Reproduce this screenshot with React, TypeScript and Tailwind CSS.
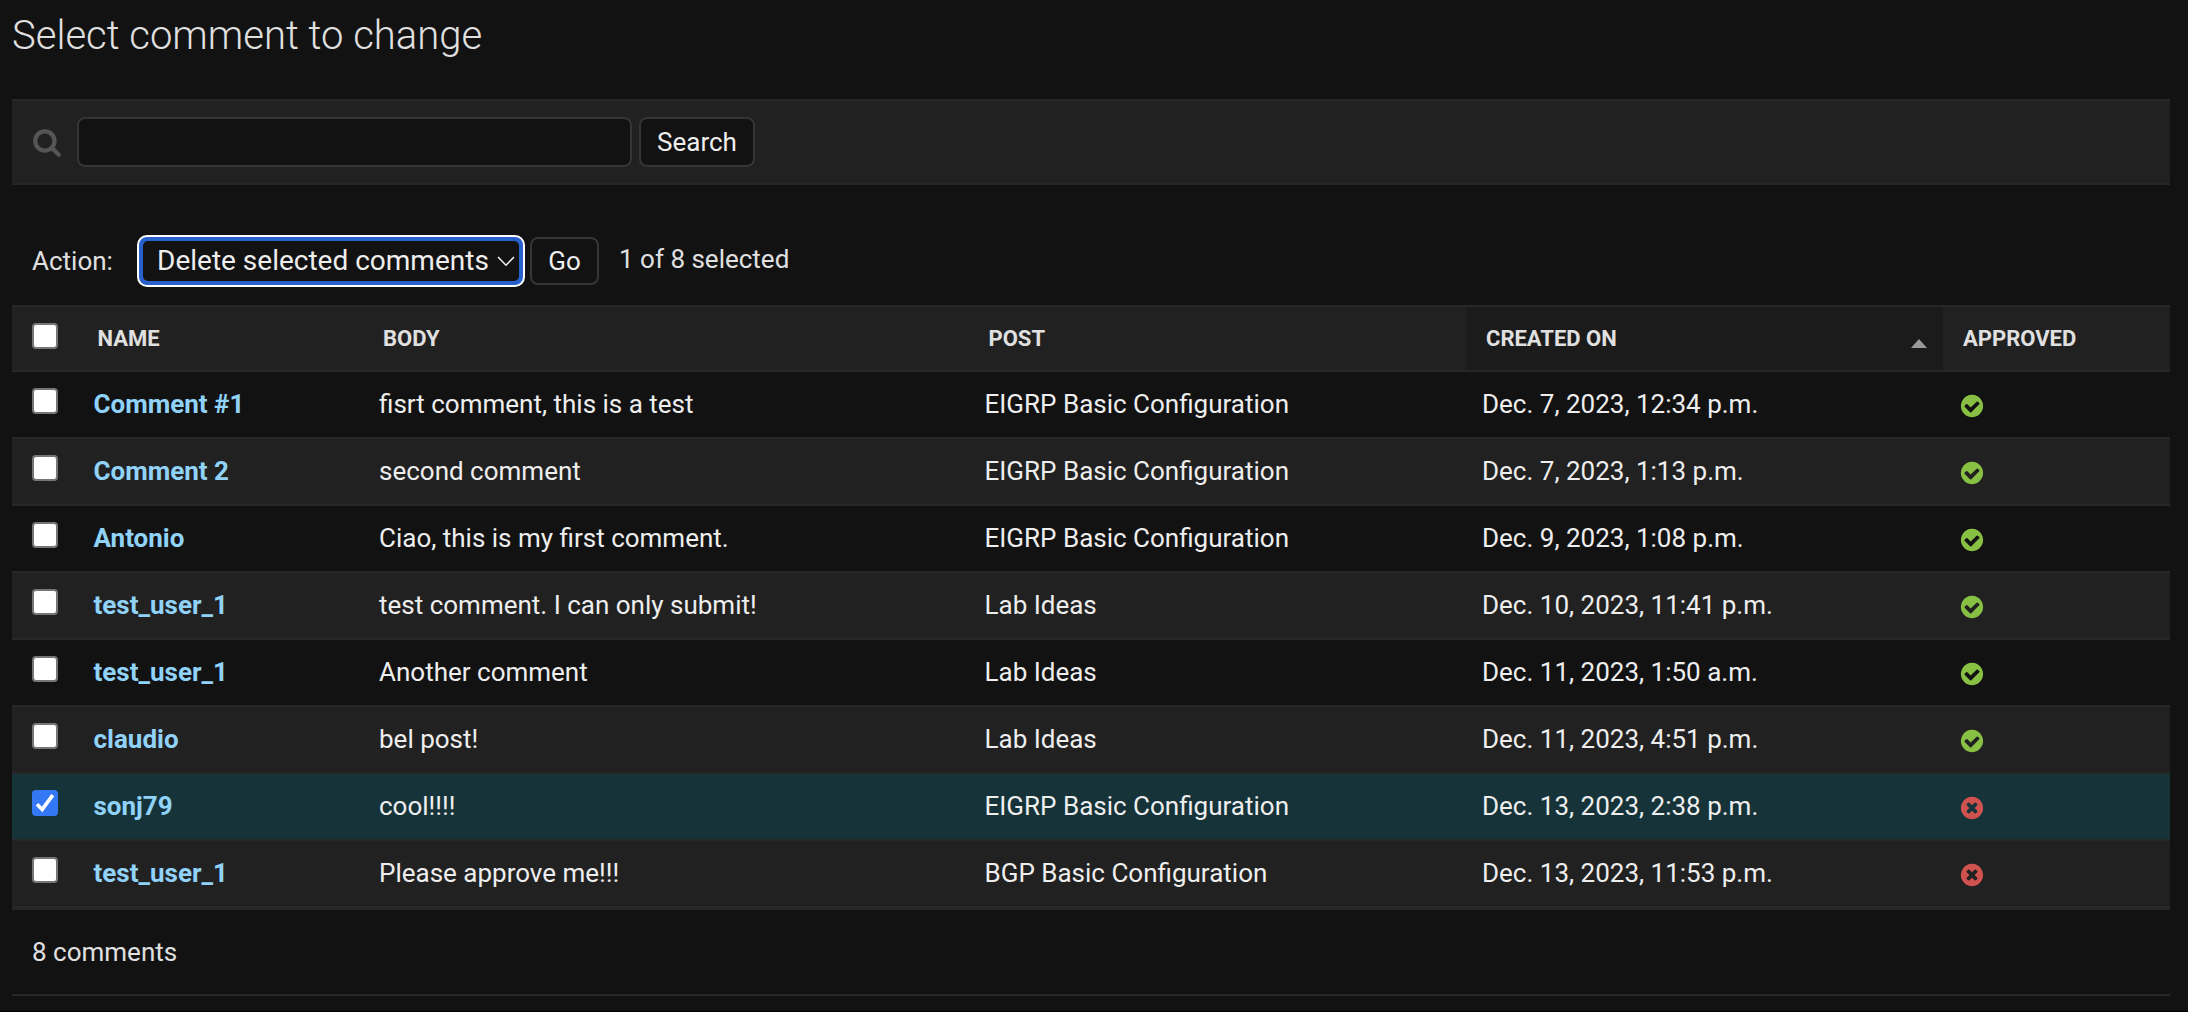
import React from "react";

const comments = [
  { name: "Comment #1", body: "fisrt comment, this is a test", post: "EIGRP Basic Configuration", created: "Dec. 7, 2023, 12:34 p.m.", approved: true },
  { name: "Comment 2", body: "second comment", post: "EIGRP Basic Configuration", created: "Dec. 7, 2023, 1:13 p.m.", approved: true },
  { name: "Antonio", body: "Ciao, this is my first comment.", post: "EIGRP Basic Configuration", created: "Dec. 9, 2023, 1:08 p.m.", approved: true },
  { name: "test_user_1", body: "test comment. I can only submit!", post: "Lab Ideas", created: "Dec. 10, 2023, 11:41 p.m.", approved: true },
  { name: "test_user_1", body: "Another comment", post: "Lab Ideas", created: "Dec. 11, 2023, 1:50 a.m.", approved: true },
  { name: "claudio", body: "bel post!", post: "Lab Ideas", created: "Dec. 11, 2023, 4:51 p.m.", approved: true },
  { name: "sonj79", body: "cool!!!!", post: "EIGRP Basic Configuration", created: "Dec. 13, 2023, 2:38 p.m.", approved: false, selected: true },
  { name: "test_user_1", body: "Please approve me!!!", post: "BGP Basic Configuration", created: "Dec. 13, 2023, 11:53 p.m.", approved: false },
];

const columns = "grid grid-cols-[65.5px_285.5px_605.5px_497.5px_477px_227px]";

function SearchIcon() {
  return (
    <svg viewBox="0 0 1792 1792" className="size-[30px] fill-[#555555]">
      <path d="M1216 832q0-185-131.5-316.5t-316.5-131.5-316.5 131.5-131.5 316.5 131.5 316.5 316.5 131.5 316.5-131.5 131.5-316.5zm512 832q0 52-38 90t-90 38q-54 0-90-38l-343-342q-179 124-399 124-143 0-273.5-55.5t-225-150-150-225-55.5-273.5 55.5-273.5 150-225 225-150 273.5-55.5 273.5 55.5 225 150 150 225 55.5 273.5q0 220-124 399l343 343q37 37 37 90z" />
    </svg>
  );
}

function StatusIcon({ ok }: { ok: boolean }) {
  return ok ? (
    <svg viewBox="0 0 1792 1792" className="size-[26px] fill-[#88c044]">
      <path d="M1412 734q0-28-18-46l-91-90q-19-19-45-19t-45 19l-408 407-226-226q-19-19-45-19t-45 19l-91 90q-18 18-18 46 0 27 18 45l362 362q19 19 45 19 27 0 46-19l543-543q18-18 18-45zm252 162q0 209-103 385.5t-279.5 279.5-385.5 103-385.5-103-279.5-279.5-103-385.5 103-385.5 279.5-279.5 385.5-103 385.5 103 279.5 279.5 103 385.5z" />
    </svg>
  ) : (
    <svg viewBox="0 0 1792 1792" className="size-[26px] fill-[#cf524e]">
      <path d="M1277 1122q0-26-19-45l-181-181 181-181q19-19 19-45 0-27-19-46l-90-90q-19-19-46-19-26 0-45 19l-181 181-181-181q-19-19-45-19-27 0-46 19l-90 90q-19 19-19 46 0 26 19 45l181 181-181 181q-19 19-19 45 0 27 19 46l90 90q19 19 46 19 26 0 45-19l181-181 181 181q19 19 45 19 27 0 46-19l90-90q19-19 19-46zm387-226q0 209-103 385.5t-279.5 279.5-385.5 103-385.5-103-279.5-279.5-103-385.5 103-385.5 279.5-279.5 385.5-103 385.5 103 279.5 279.5 103 385.5z" />
    </svg>
  );
}

function Checkbox({ checked = false }: { checked?: boolean }) {
  return checked ? (
    <span className="block size-[26px] rounded-[4px] bg-[#3478f6]">
      <svg viewBox="0 0 26 26" className="size-[26px] fill-none stroke-white stroke-[3.6]">
        <path d="M5 14.2 L10.2 19.4 L20.8 5.2" />
      </svg>
    </span>
  ) : (
    <span className="block size-[26px] rounded-[4px] border-2 border-[#767676] bg-white" />
  );
}

function HeaderCell({ label }: { label: string }) {
  return <div className="flex h-full items-center pl-5 pb-px">{label}</div>;
}

export default function App() {
  return (
    <div className="flex h-[1012px] w-[2188px] flex-col border-b border-black bg-[#121212] pr-[18px] pl-3 font-[Roboto,sans-serif] text-[26px] text-[#eeeeee]">
      <h1 className="h-[99px] pt-3 text-[40px] leading-[48px] font-light text-[#e0e0e0]">Select comment to change</h1>

      <div className="flex h-[86px] items-center border-y-2 border-[#272727] bg-[#212121] pl-5">
        <SearchIcon />
        <input className="ml-[15px] h-[50px] w-[555px] rounded-[8px] border-2 border-[#353535] bg-[#121212] px-3" />
        <button className="ml-[7px] h-[50px] w-[116px] rounded-[8px] border-2 border-[#353535] bg-[#121212]">Search</button>
      </div>

      <div className="flex h-[120px] pt-[50px] pl-5">
        <span className="w-[105px] pt-[11px] leading-[30px] text-[#e0e0e0]">Action:</span>
        <div className="flex h-[52px] w-[388px] items-center justify-between rounded-[10px] border-2 border-white bg-[#2860cc] p-1">
          <div className="flex h-10 w-full items-center justify-between rounded-[5px] bg-[#121212] pr-1 pl-[14px] text-[28px]">
            <span className="pb-px leading-[38px] whitespace-nowrap">Delete selected comments</span>
            <svg viewBox="0 0 18 11" className="h-[11px] w-[18px] shrink-0 fill-none stroke-[#eeeeee] stroke-[1.6]">
              <path d="M1 1 L9 9.2 L17 1" />
            </svg>
          </div>
        </div>
        <button className="mt-[2px] ml-[5px] h-12 w-[69px] rounded-[8px] border-2 border-[#353535] bg-[#121212]">Go</button>
        <span className="ml-5 pt-[9px] leading-[30px] text-[#e0e0e0]">1 of 8 selected</span>
      </div>

      <div className="border-b-2 border-[#272727]">
        <div className={`${columns} h-[67px] items-center border-y-2 border-[#272727] bg-[#212121] text-[22px] font-bold text-[#e0e0e0]`}>
          <div className="flex h-full pt-4 pl-5"><Checkbox /></div>
          <HeaderCell label="NAME" />
          <HeaderCell label="BODY" />
          <HeaderCell label="POST" />
          <div className="flex h-full items-center justify-between bg-[#1b1b1b] pr-4 pb-px pl-5">
            <span>CREATED ON</span>
            <svg viewBox="0 0 16 9" className="mt-[10px] h-[9px] w-4 fill-[#999999]">
              <path d="M8 0 L16 9 H0 Z" />
            </svg>
          </div>
          <HeaderCell label="APPROVED" />
        </div>
        {comments.map((c, i) => (
          <div
            key={i}
            className={`${columns} h-[67px] border-b-2 border-[#272727] leading-[30px] ${c.selected ? "bg-[#153338]" : i % 2 ? "bg-[#212121]" : "bg-[#121212]"}`}
          >
            <div className="pt-4 pl-5"><Checkbox checked={c.selected} /></div>
            <div className="pt-[17px] pl-4 font-bold text-[#91d3f8]">{c.name}</div>
            <div className="pt-[17px] pl-4">{c.body}</div>
            <div className="pt-[17px] pl-4">{c.post}</div>
            <div className="pt-[17px] pl-4">{c.created}</div>
            <div className="pt-[21px] pl-4"><StatusIcon ok={c.approved} /></div>
          </div>
        ))}
      </div>

      <div className="h-[86px] border-b-2 border-[#272727] pt-[27px] pl-5 leading-[30px] text-[#e0e0e0]">8 comments</div>
    </div>
  );
}
